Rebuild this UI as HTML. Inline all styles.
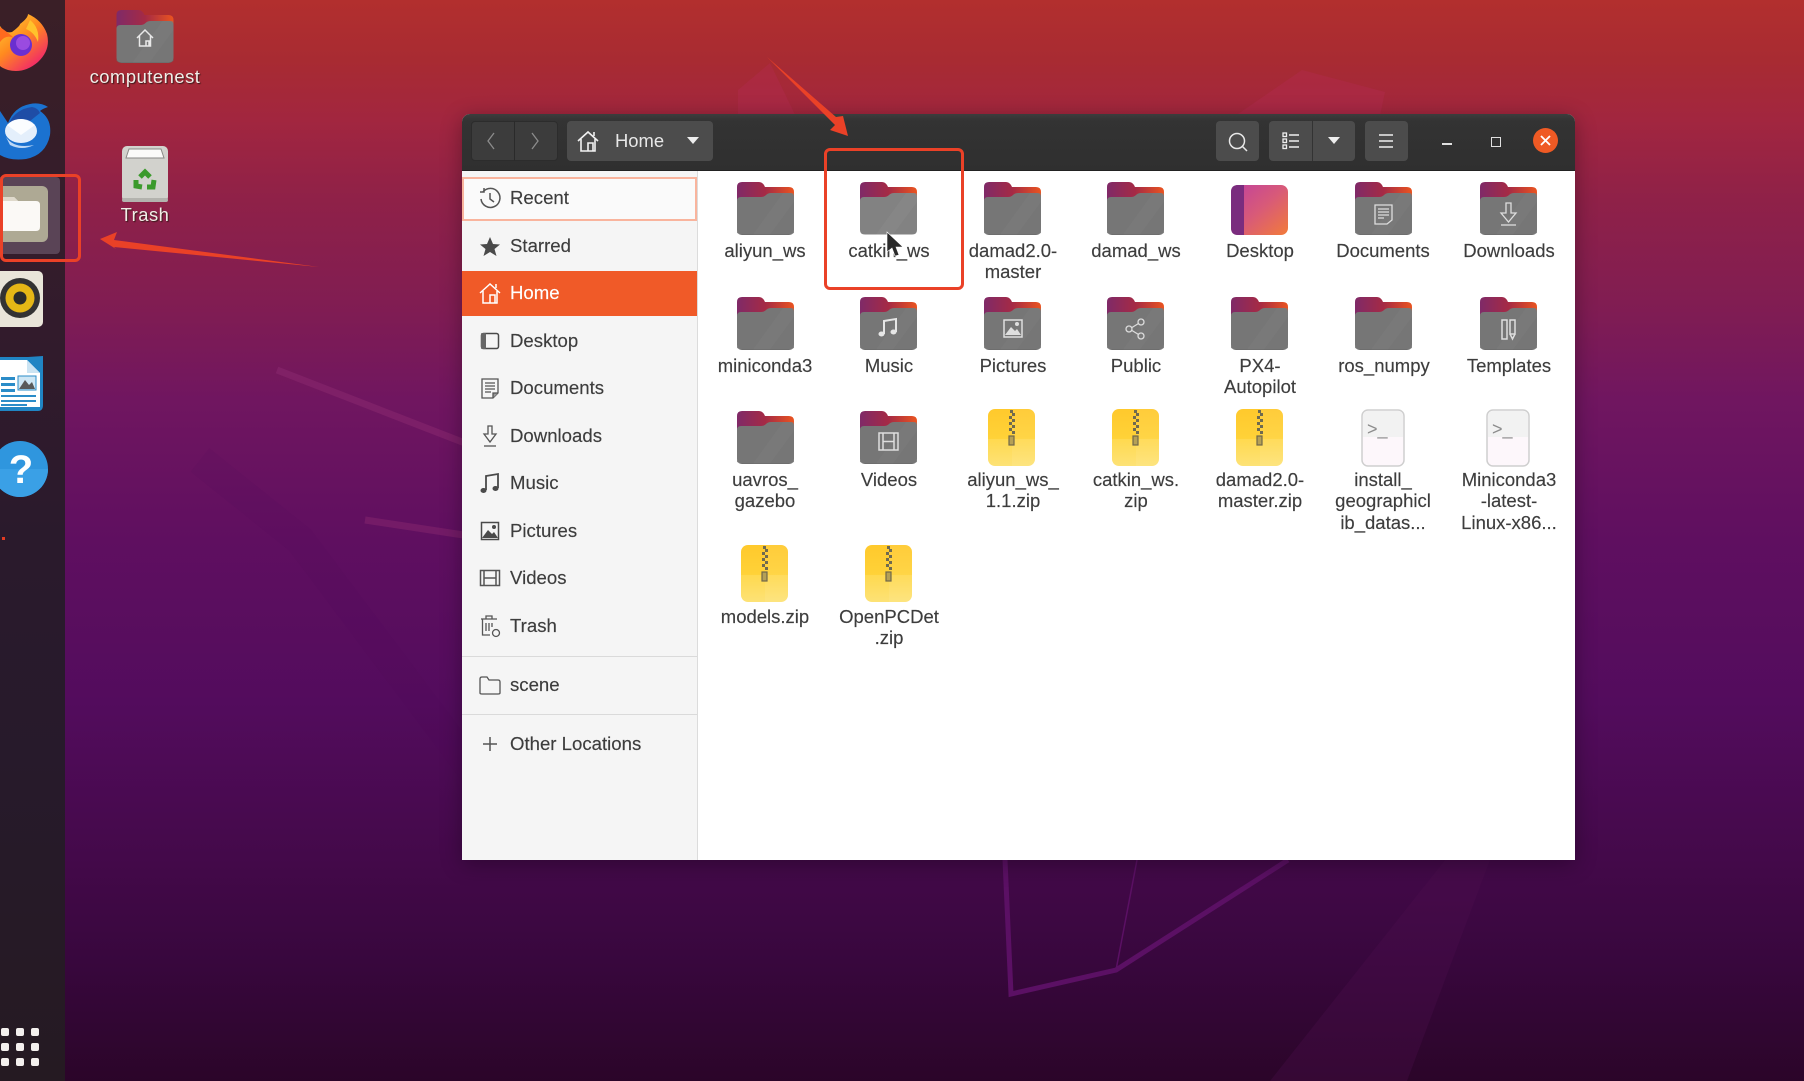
<!DOCTYPE html>
<html lang="en"><head><meta charset="utf-8"><title>Ubuntu Files</title>
<style>
html,body{margin:0;padding:0;width:1804px;height:1081px;overflow:hidden;background:#5f0f60}
body{font-family:"Liberation Sans",sans-serif}
#root{position:absolute;left:0;top:0;width:1804px;height:1081px;overflow:hidden;filter:blur(.35px)}
.a{position:absolute}
#bg{position:absolute;left:0;top:0}
#dock{position:absolute;left:0;top:0;width:65px;height:1081px;background:linear-gradient(#3a1f27 0,#321b2c 30%,#2a1a2c 50%,#271a2b 70%,#251a22 100%)}
#win{position:absolute;left:462px;top:114px;width:1113px;height:746px;border-radius:8px 8px 0 0;background:#fff;box-shadow:0 4px 22px rgba(0,0,0,.32)}
#bar{position:absolute;left:0;top:0;width:1113px;height:57px;border-radius:8px 8px 0 0;background:linear-gradient(#3d3d3d,#333 12%,#2f2f2f);border-bottom:1px solid #222;box-sizing:border-box}
.btn{position:absolute;top:7px;height:40px;background:#4c4c4c;border-radius:4px}
#side{position:absolute;left:0;top:57px;width:235px;height:689px;background:#f5f5f5;border-right:1px solid #dcdcdc}
.row{position:absolute;left:48px;font-size:18.6px;line-height:24px;color:#3d3d3d;white-space:nowrap;-webkit-text-stroke:.15px #3d3d3d}
.div{position:absolute;left:0;width:235px;height:1px;background:#dadada}
.si{position:absolute;left:15px;width:26px;height:26px}
.l{position:absolute;width:124px;text-align:center;font-size:18.5px;line-height:21.3px;color:#3d3d3d;-webkit-text-stroke:.15px #3d3d3d}
.ic{position:absolute}
.d{position:absolute;width:8px;height:8px;border-radius:2px;background:#f4f0ee}
.dl{position:absolute;color:#f2eee8;font-size:18.4px;letter-spacing:.5px;text-shadow:1px 1px 1px #3a1a1a;white-space:nowrap;text-align:center;width:140px;line-height:22px}
</style></head><body>
<div id="root">
<svg id="bg" width="1804" height="1081" viewBox="0 0 1804 1081">
<defs>
<linearGradient id="wall" x1="0" y1="0" x2="0" y2="1">
<stop offset="0" stop-color="#b22f2e"/><stop offset=".055" stop-color="#a82b32"/><stop offset=".11" stop-color="#a2263f"/><stop offset=".185" stop-color="#8f2148"/><stop offset=".28" stop-color="#811d52"/><stop offset=".37" stop-color="#701660"/><stop offset=".5" stop-color="#5f0f60"/><stop offset=".65" stop-color="#530c5d"/><stop offset=".8" stop-color="#430949"/><stop offset=".89" stop-color="#38073d"/><stop offset="1" stop-color="#2b0529"/>
</linearGradient>
</defs>
<rect width="1804" height="1081" fill="url(#wall)"/>
<path d="M738 90L770 63L800 125H738Z" fill="#b42c52" opacity=".35"/>
<path d="M1302 70L1385 92L1378 125H1222Z" fill="#b42c52" opacity=".35"/>
<path d="M277 370L470 445" stroke="#8b2a70" stroke-width="7" fill="none" opacity=".5"/>
<path d="M365 520L470 536" stroke="#8b2a70" stroke-width="7" fill="none" opacity=".45"/>
<path d="M1005 860L1011 994L1116 970L1288 860" stroke="#5b1064" stroke-width="5" fill="none"/>
<path d="M1116 970L1137 860" stroke="#5b1064" stroke-width="1.500" fill="none"/>
<path d="M200 460L300 540L480 780" stroke="#4d0a5a" stroke-width="30" fill="none" opacity=".1"/>
<path d="M1445 860L1490 860L1407 1081H1270Z" fill="#50104f" opacity=".3"/>
</svg>

<div id="dock"></div>
<div class="a" style="left:0;top:177px;width:60px;height:77px;background:#5a4456;border-radius:0 4px 4px 0"></div>

<!-- symbols -->
<svg width="0" height="0" style="position:absolute">
<defs>
<linearGradient id="tab" x1="0" y1="0" x2="1" y2="0"><stop offset="0" stop-color="#7f2a68"/><stop offset=".5" stop-color="#a52a45"/><stop offset="1" stop-color="#ea5420"/></linearGradient>
<linearGradient id="zipg" x1="0" y1="0" x2="0" y2="1"><stop offset="0" stop-color="#ffc92c"/><stop offset=".52" stop-color="#ffd238"/><stop offset=".53" stop-color="#ffd94f"/><stop offset="1" stop-color="#fde276"/></linearGradient>
<linearGradient id="desk" x1="0" y1="0" x2="1" y2="1"><stop offset="0" stop-color="#c0419e"/><stop offset=".5" stop-color="#d85a78"/><stop offset="1" stop-color="#f27b3a"/></linearGradient>
<symbol id="folder" viewBox="0 0 57 53">
<path d="M0 46V5Q0 0 5 0H22Q25 0 27 3L28 5H52Q57 5 57 10V46Z" fill="url(#tab)"/>
<path d="M0 48V19Q0 15 4 15H24Q27 15 29 13Q31 11 34 11H53Q57 11 57 15V48Q57 52.500 52 52.500H5Q0 52.500 0 48Z" fill="#767676"/>
<path d="M16 52.500L46 11H57V20L33 52.500Z" fill="#808080" opacity=".3"/>
<path d="M0 48Q0 52.500 5 52.500H52Q57 52.500 57 48V50.500Q55 53 52 53H5Q2 53 0 50.500Z" fill="#666"/>
</symbol>
<symbol id="folderh" viewBox="0 0 57 53">
<path d="M0 46V5Q0 0 5 0H22Q25 0 27 3L28 5H52Q57 5 57 10V46Z" fill="url(#tab)"/>
<path d="M0 48V19Q0 15 4 15H24Q27 15 29 13Q31 11 34 11H53Q57 11 57 15V48Q57 52.500 52 52.500H5Q0 52.500 0 48Z" fill="#828282"/>
<path d="M16 52.500L46 11H57V20L33 52.500Z" fill="#8e8e8e" opacity=".35"/>
</symbol>
<symbol id="zip" viewBox="0 0 47 58">
<rect x="0" y="0" width="47" height="57" rx="7" fill="url(#zipg)"/>
<path d="M24 0H40Q47 0 47 7V50Q47 57 40 57H24Z" fill="#fff" opacity=".07"/>
<path d="M22 1h3v3h-3zM24 4h3v3h-3zM21 7h3v3h-3zM24 10h3v3h-3zM21 13h3v3h-3zM24 16h3v3h-3zM21 19h3v3h-3zM24 22h3v3h-3z" fill="#6f6a50"/>
<rect x="21" y="27" width="5" height="9" fill="#b5a056" stroke="#70684a" stroke-width="1.200"/>
</symbol>
<symbol id="script" viewBox="0 0 44 58">
<rect x="1" y="1" width="42" height="56" rx="6" fill="#fdf7fb" stroke="#cfcfcf" stroke-width="1.500"/>
<path d="M2 28V7Q2 2 7 2H37Q42 2 42 7V28Z" fill="#f2f2f2"/>
<text x="6" y="26" font-family="Liberation Sans,sans-serif" font-size="18" fill="#8c8c8c">&gt;_</text>
</symbol>
</defs>
</svg>

<!-- dock icons -->
<svg class="ic" style="left:0;top:12px" width="50" height="60" viewBox="0 0 50 60">
<defs><linearGradient id="ff" x1="0" y1="0" x2=".7" y2="1"><stop offset="0" stop-color="#ffd535"/><stop offset=".5" stop-color="#ff8a1f"/><stop offset="1" stop-color="#f0216e"/></linearGradient></defs>
<path d="M0 14Q5 22 12 20Q20 14 20 12Q28 6 28 2Q42 8 47 22Q51 38 38 50Q24 62 8 58Q2 56 0 54Z" fill="url(#ff)"/>
<circle cx="21" cy="33" r="11" fill="#6a2fd0"/><circle cx="23" cy="31" r="7" fill="#9a4be0"/>
<path d="M0 15Q10 22 14 26Q6 22 0 30Z" fill="#ff6a1f"/><path d="M30 8Q40 16 38 30Q34 20 26 17Z" fill="#ffc22c"/>
</svg>
<svg class="ic" style="left:0;top:101px" width="52" height="60" viewBox="0 0 52 60">
<path d="M0 10Q4 16 8 22Q14 6 30 3Q40 1 48 6Q42 8 40 10Q52 18 50 34Q46 54 26 58Q10 60 0 54Z" fill="#1b72d0"/>
<path d="M9 22Q16 8 32 6Q38 7 40 12L30 20Z" fill="#1f4da6"/>
<ellipse cx="21" cy="30" rx="16" ry="12" fill="#e4effb"/>
<path d="M7 24L21 34L35 24Q26 18 21 18Q14 18 7 24Z" fill="#fbfdff"/>
<path d="M6 36Q14 48 34 44Q22 50 10 44Z" fill="#bcd8f6"/>
</svg>
<svg class="ic" style="left:0;top:185px" width="50" height="58" viewBox="0 0 50 58">
<rect x="-6" y="1" width="54" height="56" rx="6" fill="#aea994"/>
<path d="M-4 12H14L18 16H36Q40 16 40 20V42Q40 46 36 46H-4Z" fill="#fbf9f6"/>
<path d="M-4 12H14L18 16H-4Z" fill="#dfd9cb"/>
</svg>
<svg class="ic" style="left:0;top:270px" width="45" height="58" viewBox="0 0 45 58">
<rect x="-6" y="1" width="49" height="56" rx="5" fill="#e9e5d9"/>
<circle cx="20" cy="28" r="20" fill="#333"/><circle cx="20" cy="28" r="14.500" fill="#e5b716"/><circle cx="20" cy="28" r="6.500" fill="#2b2b2b"/>
</svg>
<svg class="ic" style="left:0;top:355px" width="45" height="58" viewBox="0 0 45 58">
<path d="M-4 2H28L43 1V50Q43 56 38 56H-4Z" fill="#2085c4"/>
<path d="M0 5H27L40 18V52H0Z" fill="#fff"/>
<path d="M27 5L40 18H27Z" fill="#cbe4f3"/>
<path d="M1 22H15V25H1zM1 28H15V31H1zM1 34H15V37H1zM1 40H36V42H1zM1 45H36V47H1zM1 49H27V51H1z" fill="#2b8cc8"/>
<rect x="18" y="21" width="18" height="14" fill="#cfe7f5" stroke="#2b8cc8" stroke-width="1"/>
<path d="M19 34L25 25L29 30L32 27L35 34Z" fill="#5a5a5a"/>
</svg>
<svg class="ic" style="left:0;top:441px" width="50" height="57" viewBox="0 0 50 57">
<circle cx="20" cy="28" r="28" fill="#2f96de"/>
<path d="M-8 28H48A28 28 0 0 1 -8 28Z" fill="#3aa0e6"/>
<text x="21" y="42" text-anchor="middle" font-family="Liberation Sans,sans-serif" font-weight="bold" font-size="40" fill="#fff">?</text>
</svg>
<div class="a" style="left:2px;top:537px;width:3px;height:3px;background:#e33a22"></div>
<div class="d" style="left:1px;top:1028px"></div><div class="d" style="left:16px;top:1028px"></div><div class="d" style="left:31px;top:1028px"></div>
<div class="d" style="left:1px;top:1043px"></div><div class="d" style="left:16px;top:1043px"></div><div class="d" style="left:31px;top:1043px"></div>
<div class="d" style="left:1px;top:1058px"></div><div class="d" style="left:16px;top:1058px"></div><div class="d" style="left:31px;top:1058px"></div>

<!-- desktop icons -->
<svg class="ic" style="left:116px;top:10px" width="58" height="53"><use href="#folder" width="58" height="53"/>
<path d="M21 28L29 20L37 28M23.500 26V36H34.500V26M30 36V31H33V36" fill="none" stroke="#e8e8e8" stroke-width="1.500"/></svg>
<div class="dl" style="left:75px;top:66px">computenest</div>
<svg class="ic" style="left:122px;top:146px" width="46" height="57" viewBox="0 0 46 57">
<rect x="0" y="0" width="46" height="56" rx="5" fill="#d2d2cd"/>
<path d="M4 12L7 3H39L42 12Z" fill="#fbfbf9" stroke="#8a8a86"/>
<rect x="0" y="52" width="46" height="4" rx="2" fill="#b3b3ae"/>
<g fill="none" stroke="#3b9a2c" stroke-width="5"><path d="M18 31L23 26L28 31"/><path d="M32 34L31 41L25 41"/><path d="M20 41L14 40L14 34"/></g>
</svg>
<div class="dl" style="left:75px;top:204px">Trash</div>

<!-- window -->
<div id="win">
<div id="side">
<div class="a" style="left:0;top:6px;width:235px;height:44px;box-sizing:border-box;border:2px solid #f9b49d;background:#fafafa"></div>
<div class="a" style="left:0;top:100px;width:235px;height:45px;background:#f05a28"></div>
<div class="row" style="top:15px">Recent</div>
<div class="row" style="top:63px">Starred</div>
<div class="row" style="top:110px;color:#fff;-webkit-text-stroke:.15px #fff">Home</div>
<div class="row" style="top:158px">Desktop</div>
<div class="row" style="top:205px">Documents</div>
<div class="row" style="top:253px">Downloads</div>
<div class="row" style="top:300px">Music</div>
<div class="row" style="top:348px">Pictures</div>
<div class="row" style="top:395px">Videos</div>
<div class="row" style="top:443px">Trash</div>
<div class="div" style="top:485px"></div>
<div class="row" style="top:502px">scene</div>
<div class="div" style="top:543px"></div>
<div class="row" style="top:561px">Other Locations</div>

<svg class="si" style="top:14px" viewBox="0 0 26 26" fill="none" stroke="#555" stroke-width="1.500"><path d="M6 7A9.500 9.500 0 1 1 4 14"/><path d="M3 7H7V3" /><path d="M13 8V14L17 17"/></svg>
<svg class="si" style="top:62px" viewBox="0 0 26 26"><path d="M13 4L16 11L23 11.500L17.500 16L19.500 23L13 19L6.500 23L8.500 16L3 11.500L10 11Z" fill="#4a4a4a"/></svg>
<svg class="si" style="top:109px" viewBox="0 0 26 26" fill="none" stroke="#fff" stroke-width="1.500"><path d="M3 13L13 4L23 13"/><path d="M6 11V23H20V11"/><path d="M13 23V15H18V23"/><path d="M19 4V8"/></svg>
<svg class="si" style="top:157px" viewBox="0 0 26 26"><rect x="4.500" y="5.500" width="17" height="15" rx="2" fill="none" stroke="#4a4a4a" stroke-width="1.500"/><rect x="4" y="5" width="5" height="16" rx="1" fill="#666"/></svg>
<svg class="si" style="top:204px" viewBox="0 0 26 26" fill="none" stroke="#555" stroke-width="1.300"><path d="M5 4H21V18L16 23H5Z"/><path d="M8 8H18M8 11H18M8 14H18M8 17H14"/><path d="M16 23V18H21" fill="#999"/></svg>
<svg class="si" style="top:252px" viewBox="0 0 26 26" fill="none" stroke="#555" stroke-width="1.300"><path d="M11 3H15V11H19L13 19L7 11H11Z"/><path d="M7 23H19"/></svg>
<svg class="si" style="top:299px" viewBox="0 0 26 26"><path d="M9 20V6L21 4V18" fill="none" stroke="#4a4a4a" stroke-width="1.800"/><ellipse cx="6.500" cy="20.500" rx="3" ry="2.500" fill="#4a4a4a"/><ellipse cx="18.500" cy="18.500" rx="3" ry="2.500" fill="#4a4a4a"/></svg>
<svg class="si" style="top:347px" viewBox="0 0 26 26"><rect x="4.500" y="4.500" width="17" height="17" fill="none" stroke="#4a4a4a" stroke-width="1.500"/><path d="M5 20L11 12L15 16L17 14L21 20Z" fill="#4a4a4a"/><circle cx="17" cy="9" r="2" fill="#4a4a4a"/></svg>
<svg class="si" style="top:394px" viewBox="0 0 26 26" fill="none" stroke="#555" stroke-width="1.500"><rect x="3.500" y="5.500" width="19" height="15"/><path d="M7 5.500V20.500M19 5.500V20.500M7 13H19"/></svg>
<svg class="si" style="top:442px" viewBox="0 0 26 26" fill="none" stroke="#555" stroke-width="1.300"><path d="M4 6H20M9 6V3H15V6M5.500 6V22H13M9 10V18M12 10V18M15 10V14"/><circle cx="19" cy="20" r="3.500"/></svg>
<svg class="si" style="top:501px" viewBox="0 0 26 26" fill="none" stroke="#555" stroke-width="1.300"><path d="M3 21V7Q3 5 5 5H10L12 8H21Q23 8 23 10V21Q23 22 21 22H5Q3 22 3 21Z"/></svg>
<svg class="si" style="top:560px" viewBox="0 0 26 26" fill="none" stroke="#555" stroke-width="1.500"><path d="M13 6V20M6 13H20"/></svg>
</div>

<div id="bar">
<div class="btn" style="left:9px;width:87px;background:#3c3c3c;border:1px solid #2c2c2c;box-sizing:border-box"></div>
<div class="a" style="left:52px;top:7px;width:1px;height:40px;background:#2a2a2a"></div>
<svg class="ic" style="left:20px;top:17px" width="20" height="20" fill="none" stroke="#8c8c8c" stroke-width="1.300"><path d="M12 2L6 10L12 18"/></svg>
<svg class="ic" style="left:63px;top:17px" width="20" height="20" fill="none" stroke="#8c8c8c" stroke-width="1.300"><path d="M7 2L13 10L7 18"/></svg>
<div class="btn" style="left:105px;width:146px"></div>
<svg class="ic" style="left:115px;top:15px" width="22" height="24" viewBox="0 0 22 24" fill="none" stroke="#f2f2f2" stroke-width="1.600"><path d="M1 12L11 3L21 12"/><path d="M4 10V22H18V10"/><path d="M11 22V14H16V22"/><path d="M17 3V7"/></svg>
<div class="a" style="left:153px;top:16px;font-size:18.4px;line-height:22px;color:#e8e8e8">Home</div>
<svg class="ic" style="left:224px;top:22px" width="14" height="9"><path d="M1 1H13L7 8Z" fill="#eee"/></svg>

<div class="btn" style="left:754px;width:43px"></div>
<svg class="ic" style="left:764px;top:16px" width="24" height="24" fill="none" stroke="#e8e8e8" stroke-width="1.500"><circle cx="11" cy="11" r="7.500"/><path d="M16.500 16.500L21 21"/></svg>
<div class="btn" style="left:807px;width:86px"></div>
<div class="a" style="left:850px;top:7px;width:1px;height:40px;background:#333"></div>
<svg class="ic" style="left:819px;top:17px" width="20" height="20" fill="none" stroke="#eee" stroke-width="1.300"><rect x="2" y="2" width="3.500" height="3.500"/><rect x="2" y="8" width="3.500" height="3.500"/><rect x="2" y="14" width="3.500" height="3.500"/><path d="M8 4H18M8 10H18M8 16H18" stroke-width="1.600"/></svg>
<svg class="ic" style="left:865px;top:22px" width="14" height="9"><path d="M1 1H13L7 8Z" fill="#eee"/></svg>
<div class="btn" style="left:903px;width:43px"></div>
<svg class="ic" style="left:915px;top:17px" width="20" height="20" stroke="#eee" stroke-width="1.500"><path d="M2 4H16M2 10H16M2 16H16"/></svg>
<div class="a" style="left:980px;top:29px;width:10px;height:1.500px;background:#e0e0e0"></div>
<div class="a" style="left:1029px;top:23px;width:8px;height:8px;border:1.500px solid #e0e0e0"></div>
<div class="a" style="left:1071px;top:14px;width:25px;height:25px;border-radius:50%;background:#ef5a24"></div>
<svg class="ic" style="left:1071px;top:14px" width="25" height="25" stroke="#fff" stroke-width="1.800"><path d="M8 8L17 17M17 8L8 17"/></svg>
</div>
</div>

<!-- files -->
<svg class="ic" style="left:737px;top:182px" width="57" height="53"><use href="#folder"/></svg>
<svg class="ic" style="left:860px;top:182px" width="57" height="53"><use href="#folderh"/></svg>
<svg class="ic" style="left:984px;top:182px" width="57" height="53"><use href="#folder"/></svg>
<svg class="ic" style="left:1107px;top:182px" width="57" height="53"><use href="#folder"/></svg>
<svg class="ic" style="left:1231px;top:185px" width="57" height="50" viewBox="0 0 57 50"><rect width="57" height="50" rx="7" fill="url(#desk)"/><path d="M7 0H13V50H7Q0 50 0 43V7Q0 0 7 0Z" fill="#7a2c7e"/></svg>
<svg class="ic" style="left:1355px;top:182px" width="57" height="53"><use href="#folder"/><g fill="none" stroke="#dedede" stroke-width="1.300"><path d="M20 23H37V38L32 42H20Z"/><path d="M23 27H34M23 30H34M23 33H34M23 36H29"/></g></svg>
<svg class="ic" style="left:1480px;top:182px" width="57" height="53"><use href="#folder"/><g fill="none" stroke="#dedede" stroke-width="1.300"><path d="M26 21H31V31H36L28.500 40L21 31H26Z"/><path d="M21 43H36"/></g></svg>

<svg class="ic" style="left:737px;top:297px" width="57" height="53"><use href="#folder"/></svg>
<svg class="ic" style="left:860px;top:297px" width="57" height="53"><use href="#folder"/><path d="M24 37V24L36 22V35" fill="none" stroke="#e6e6e6" stroke-width="2"/><ellipse cx="21.500" cy="37" rx="3" ry="2.500" fill="#e6e6e6"/><ellipse cx="33.500" cy="35" rx="3" ry="2.500" fill="#e6e6e6"/></svg>
<svg class="ic" style="left:984px;top:297px" width="57" height="53"><use href="#folder"/><rect x="20" y="23" width="18" height="17" fill="none" stroke="#dedede" stroke-width="1.500"/><path d="M21 38L27 30L31 34L33 32L37 38Z" fill="#dedede"/><circle cx="33" cy="27" r="2" fill="#dedede"/></svg>
<svg class="ic" style="left:1107px;top:297px" width="57" height="53"><use href="#folder"/><g fill="none" stroke="#dcdcdc" stroke-width="1.300"><circle cx="22" cy="32" r="3"/><circle cx="34" cy="25" r="3"/><circle cx="34" cy="39" r="3"/><path d="M25 30.500L31.500 26.500M25 33.500L31.500 37.500"/></g></svg>
<svg class="ic" style="left:1231px;top:297px" width="57" height="53"><use href="#folder"/></svg>
<svg class="ic" style="left:1355px;top:297px" width="57" height="53"><use href="#folder"/></svg>
<svg class="ic" style="left:1480px;top:297px" width="57" height="53"><use href="#folder"/><g fill="none" stroke="#dedede" stroke-width="1.500"><rect x="22" y="23" width="5" height="19"/><rect x="30" y="23" width="5" height="14"/><path d="M30 37L32.500 42L35 37"/></g></svg>

<svg class="ic" style="left:737px;top:411px" width="57" height="53"><use href="#folder"/></svg>
<svg class="ic" style="left:860px;top:411px" width="57" height="53"><use href="#folder"/><g fill="none" stroke="#dedede" stroke-width="1.500"><rect x="19" y="22" width="19" height="17"/><path d="M23 22V39M34 22V39M23 30.500H34"/></g></svg>
<svg class="ic" style="left:988px;top:409px" width="47" height="58"><use href="#zip"/></svg>
<svg class="ic" style="left:1112px;top:409px" width="47" height="58"><use href="#zip"/></svg>
<svg class="ic" style="left:1236px;top:409px" width="47" height="58"><use href="#zip"/></svg>
<svg class="ic" style="left:1361px;top:409px" width="44" height="58"><use href="#script"/></svg>
<svg class="ic" style="left:1486px;top:409px" width="44" height="58"><use href="#script"/></svg>

<svg class="ic" style="left:741px;top:545px" width="47" height="58"><use href="#zip"/></svg>
<svg class="ic" style="left:865px;top:545px" width="47" height="58"><use href="#zip"/></svg>

<div class="l" style="left:703px;top:240px">aliyun_ws</div>
<div class="l" style="left:827px;top:240px">catkin_ws</div>
<div class="l" style="left:951px;top:240px">damad2.0-<br>master</div>
<div class="l" style="left:1074px;top:240px">damad_ws</div>
<div class="l" style="left:1198px;top:240px">Desktop</div>
<div class="l" style="left:1321px;top:240px">Documents</div>
<div class="l" style="left:1447px;top:240px">Downloads</div>

<div class="l" style="left:703px;top:355px">miniconda3</div>
<div class="l" style="left:827px;top:355px">Music</div>
<div class="l" style="left:951px;top:355px">Pictures</div>
<div class="l" style="left:1074px;top:355px">Public</div>
<div class="l" style="left:1198px;top:355px">PX4-<br>Autopilot</div>
<div class="l" style="left:1322px;top:355px">ros_numpy</div>
<div class="l" style="left:1447px;top:355px">Templates</div>

<div class="l" style="left:703px;top:469px">uavros_<br>gazebo</div>
<div class="l" style="left:827px;top:469px">Videos</div>
<div class="l" style="left:951px;top:469px">aliyun_ws_<br>1.1.zip</div>
<div class="l" style="left:1074px;top:469px">catkin_ws.<br>zip</div>
<div class="l" style="left:1198px;top:469px">damad2.0-<br>master.zip</div>
<div class="l" style="left:1321px;top:469px">install_<br>geographicl<br>ib_datas...</div>
<div class="l" style="left:1447px;top:469px">Miniconda3<br>-latest-<br>Linux-x86...</div>

<div class="l" style="left:703px;top:606px">models.zip</div>
<div class="l" style="left:827px;top:606px">OpenPCDet<br>.zip</div>

<!-- cursor -->
<svg class="ic" style="left:886px;top:231px" width="20" height="28"><path d="M1 1L1 21L6 17L9 25L13 24L10 16L17 16Z" fill="#2a2a2a" stroke="#fff" stroke-width=".6"/></svg>

<!-- annotations -->
<div class="a" style="left:824px;top:148px;width:140px;height:142px;box-sizing:border-box;border:3.500px solid #ea4127;border-radius:6px"></div>
<div class="a" style="left:0;top:174px;width:81px;height:88px;box-sizing:border-box;border:3.500px solid #ea4127;border-radius:6px"></div>
<svg class="ic" style="left:0;top:0" width="1000" height="300"><path d="M767 57L836 117L843 116L848 136L830 130L835 125Z" fill="#ea4127"/><path d="M100 239L117 232L114 240L319 267L114 247L116 249Z" fill="#ea4127"/></svg>
</div>
</body></html>
